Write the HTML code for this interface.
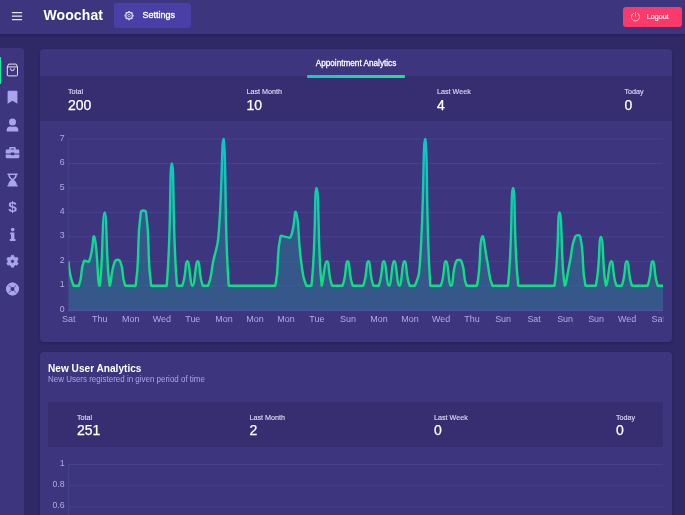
<!DOCTYPE html>
<html><head><meta charset="utf-8"><title>Woochat</title>
<style>
*{box-sizing:border-box;margin:0;padding:0}
html,body{width:685px;height:515px;overflow:hidden;background:#2f2967;font-family:"Liberation Sans",sans-serif;color:#fff}
.abs{position:absolute}
#top{position:absolute;left:0;top:0;width:685px;height:33.6px;background:#3d367f;box-shadow:0 1px 3px rgba(25,18,70,.45)}
#logo{position:absolute;left:43.5px;top:6.8px;font-size:14px;font-weight:bold;letter-spacing:.1px;line-height:17px;color:#fff}
#settings{position:absolute;left:114.2px;top:3.2px;width:76.700px;height:24.500px;background:#4a3fa6;border-radius:3px}
#settings span{position:absolute;left:28.400px;top:6.700px;font-size:9px;line-height:10px;color:#fff;-webkit-text-stroke:.35px #fff}
#logout{position:absolute;left:622.6px;top:6.800px;width:59px;height:20px;background:#fb3a69;border-radius:3px}
#logout span{position:absolute;left:24.2px;top:6.400px;font-size:7.200px;line-height:8px;color:#fff;-webkit-text-stroke:.2px #fff}
#side{position:absolute;left:0;top:48.2px;width:23.7px;height:480px;background:#3d367f;border-top-right-radius:4px}
#act{position:absolute;left:0;top:56.8px;width:1.400px;height:27.3px;background:#1de9a0}
.card{position:absolute;left:40px;width:632.300px;background:#3d367f;border-radius:4px;box-shadow:0 1px 3px rgba(25,18,70,.4)}
#c1{top:49.2px;height:292.8px}
#c2{top:352.4px;height:200px}
.stats{position:absolute;background:#362e71}
.lbl{position:absolute;font-size:7.2px;line-height:8px;color:#dcd8f5;white-space:nowrap;-webkit-text-stroke:.15px #dcd8f5}
.val{position:absolute;font-size:14px;line-height:15px;color:#fff;white-space:nowrap;-webkit-text-stroke:.25px #fff;margin-left:.5px}
#tab{position:absolute;left:256px;width:200px;top:58.4px;text-align:center;font-size:9.4px;line-height:10px;color:#fff;-webkit-text-stroke:.3px #fff;transform:scaleX(.874);white-space:nowrap}
#tabline{position:absolute;left:306.5px;top:75.2px;width:98.5px;height:2.6px;background:linear-gradient(90deg,#10cdbd,#1de28e);border-radius:1.3px}
#t2{position:absolute;left:48px;top:362.4px;font-size:11px;line-height:13px;font-weight:bold;color:#fff;transform:scaleX(.919);transform-origin:0 0;white-space:nowrap}
#s2{position:absolute;left:48px;top:374.2px;font-size:8.6px;line-height:10px;color:#aba5ea;transform:scaleX(.928);transform-origin:0 0;white-space:nowrap}
svg{position:absolute;left:0;top:0}
svg text{font-family:"Liberation Sans",sans-serif;font-size:9.7px;fill:#b0abe0}
.g line{stroke:#4a4492;stroke-width:.8}
#wrap{position:absolute;left:0;top:0;width:685px;height:515px;overflow:hidden;will-change:transform}
</style></head><body><div id="wrap">
<div id="top"></div>
<div id="logo">Woochat</div>
<div id="settings"><span>Settings</span></div>
<div id="logout"><span>Logout</span></div>
<div id="side"></div><div id="act"></div>
<div class="card" id="c1"></div>
<div class="stats" style="left:40px;top:76.2px;width:632px;height:45.300px"></div>
<div id="tab">Appointment Analytics</div><div id="tabline"></div>
<div class="lbl" style="left:68px;top:88.1px">Total</div><div class="val" style="left:67.5px;top:97.6px">200</div>
<div class="lbl" style="left:246.5px;top:88.1px">Last Month</div><div class="val" style="left:246px;top:97.6px">10</div>
<div class="lbl" style="left:437px;top:88.1px">Last Week</div><div class="val" style="left:436.5px;top:97.6px">4</div>
<div class="lbl" style="left:624.5px;top:88.1px">Today</div><div class="val" style="left:624px;top:97.6px">0</div>
<div class="card" id="c2"></div>
<div id="t2">New User Analytics</div>
<div id="s2">New Users registered in given period of time</div>
<div class="stats" style="left:48px;top:402px;width:615px;height:44.5px"></div>
<div class="lbl" style="left:77px;top:413.6px">Total</div><div class="val" style="left:76.5px;top:423.1px">251</div>
<div class="lbl" style="left:249.5px;top:413.6px">Last Month</div><div class="val" style="left:249px;top:423.1px">2</div>
<div class="lbl" style="left:434px;top:413.6px">Last Week</div><div class="val" style="left:433.5px;top:423.1px">0</div>
<div class="lbl" style="left:616px;top:413.6px">Today</div><div class="val" style="left:615.5px;top:423.1px">0</div>
<svg width="685" height="515" viewBox="0 0 685 515">
<defs>
<linearGradient id="sg" gradientUnits="userSpaceOnUse" x1="0" y1="139" x2="0" y2="285.5"><stop offset="0" stop-color="#0cc5c8"/><stop offset="1" stop-color="#0fe07f"/></linearGradient>
<clipPath id="cp"><rect x="50" y="300" width="613.2" height="40"/></clipPath><clipPath id="cc"><rect x="68" y="130" width="595.2" height="185"/></clipPath><filter id="bl" x="-2%" y="-5%" width="104%" height="110%"><feGaussianBlur stdDeviation=".25"/></filter></defs>
<g class="g"><line x1="68" x2="663" y1="310.2" y2="310.2"/><line x1="68" x2="663" y1="285.7" y2="285.7"/><line x1="68" x2="663" y1="261.3" y2="261.3"/><line x1="68" x2="663" y1="236.8" y2="236.8"/><line x1="68" x2="663" y1="212.4" y2="212.4"/><line x1="68" x2="663" y1="187.9" y2="187.9"/><line x1="68" x2="663" y1="163.5" y2="163.5"/><line x1="68" x2="663" y1="139.0" y2="139.0"/></g>
<g clip-path="url(#cc)" filter="url(#bl)"><path d="M68.45 261.29C68.45 261.29 69.34 275.61 73.62 285.74C74.51 285.74 77.90 285.74 78.79 285.74C83.08 275.61 79.68 271.42 83.96 261.29C84.85 259.19 88.25 263.38 89.13 261.29C93.42 251.15 92.56 232.71 94.30 236.83C97.73 244.94 97.40 285.74 99.47 285.74C102.57 278.41 102.06 212.37 104.64 212.37C107.23 212.37 105.95 267.49 109.81 285.74C111.12 285.74 110.70 271.42 114.98 261.29C115.87 259.19 119.27 259.19 120.15 261.29C124.44 271.42 121.04 275.61 125.32 285.74C126.21 285.74 127.91 285.74 130.50 285.74C133.08 285.74 135.33 285.74 135.67 285.74C140.50 251.47 136.01 246.65 140.84 212.37C141.18 209.96 145.67 209.96 146.01 212.37C150.84 246.65 146.35 251.47 151.18 285.74C151.52 285.74 153.76 285.74 156.35 285.74C158.93 285.74 158.93 285.74 161.52 285.74C164.10 285.74 166.48 285.74 166.69 285.74C171.65 227.08 169.27 163.46 171.86 163.46C174.44 163.46 172.07 227.08 177.03 285.74C177.24 285.74 181.31 285.74 182.20 285.74C186.48 275.61 184.78 261.29 187.37 261.29C189.96 261.29 189.96 285.74 192.54 285.74C195.13 285.74 195.13 261.29 197.71 261.29C200.30 261.29 198.60 275.61 202.88 285.74C203.77 285.74 207.17 285.74 208.05 285.74C212.34 275.61 210.64 273.51 213.22 261.29C215.81 249.06 217.34 249.26 218.39 236.83C222.51 188.12 221.49 139.00 223.56 139.00C226.66 153.67 223.74 214.87 228.73 285.74C228.91 285.74 231.32 285.74 233.90 285.74C236.49 285.74 236.49 285.74 239.07 285.74C241.66 285.74 241.66 285.74 244.24 285.74C246.83 285.74 246.83 285.74 249.42 285.74C252.00 285.74 252.00 285.74 254.59 285.74C257.17 285.74 257.17 285.74 259.76 285.74C262.34 285.74 262.34 285.74 264.93 285.74C267.51 285.74 267.51 285.74 270.10 285.74C272.68 285.74 274.78 285.74 275.27 285.74C279.95 263.61 275.76 258.96 280.44 236.83C280.93 234.50 283.02 236.83 285.61 236.83C288.19 236.83 289.89 238.92 290.78 236.83C295.06 226.70 294.21 208.25 295.95 212.37C299.38 220.48 297.69 236.96 301.12 261.29C302.86 273.65 302.01 275.61 306.29 285.74C307.18 285.74 311.20 285.74 311.46 285.74C316.37 239.28 314.05 187.91 316.63 187.91C319.22 187.91 317.68 256.52 321.80 285.74C322.85 285.74 324.39 261.29 326.97 261.29C329.56 261.29 327.86 275.61 332.14 285.74C333.03 285.74 334.73 285.74 337.31 285.74C339.90 285.74 341.60 285.74 342.48 285.74C346.77 275.61 345.07 261.29 347.65 261.29C350.24 261.29 348.54 275.61 352.82 285.74C353.71 285.74 355.41 285.74 357.99 285.74C360.58 285.74 362.28 285.74 363.16 285.74C367.45 275.61 365.75 261.29 368.34 261.29C370.92 261.29 369.22 275.61 373.51 285.74C374.39 285.74 377.79 285.74 378.68 285.74C382.96 275.61 381.26 261.29 383.85 261.29C386.43 261.29 386.43 285.74 389.02 285.74C391.60 285.74 391.60 261.29 394.19 261.29C396.77 261.29 396.77 285.74 399.36 285.74C401.94 285.74 401.94 261.29 404.53 261.29C407.11 261.29 405.41 275.61 409.70 285.74C410.58 285.74 413.98 285.74 414.87 285.74C419.15 275.61 419.16 273.73 420.04 261.29C424.33 200.36 422.86 139.00 425.21 139.00C428.03 145.67 425.39 214.87 430.38 285.74C430.56 285.74 432.97 285.74 435.55 285.74C438.14 285.74 439.84 285.74 440.72 285.74C445.01 275.61 443.31 261.29 445.89 261.29C448.48 261.29 448.48 285.74 451.06 285.74C453.65 285.74 451.95 271.42 456.23 261.29C457.12 259.19 460.52 259.19 461.40 261.29C465.69 271.42 462.29 275.61 466.57 285.74C467.46 285.74 469.16 285.74 471.74 285.74C474.33 285.74 476.42 285.74 476.91 285.74C481.59 263.61 478.66 244.94 482.08 236.83C483.83 232.71 484.67 249.06 487.26 261.29C489.84 273.51 488.14 275.61 492.43 285.74C493.31 285.74 495.01 285.74 497.60 285.74C500.18 285.74 500.18 285.74 502.77 285.74C505.35 285.74 507.68 285.74 507.94 285.74C512.85 239.28 510.52 187.91 513.11 187.91C515.69 187.91 513.37 239.28 518.28 285.74C518.54 285.74 520.86 285.74 523.45 285.74C526.03 285.74 526.03 285.74 528.62 285.74C531.20 285.74 531.20 285.74 533.79 285.74C536.37 285.74 536.37 285.74 538.96 285.74C541.54 285.74 541.54 285.74 544.13 285.74C546.72 285.74 546.72 285.74 549.30 285.74C551.89 285.74 554.13 285.74 554.47 285.74C559.30 251.47 557.06 212.37 559.64 212.37C562.23 212.37 560.95 267.49 564.81 285.74C566.12 285.74 567.40 273.51 569.98 261.29C572.57 249.06 570.87 246.96 575.15 236.83C576.04 234.73 579.83 234.50 580.32 236.83C585.00 258.96 580.81 263.61 585.49 285.74C585.99 285.74 588.08 285.74 590.66 285.74C593.25 285.74 595.34 285.74 595.83 285.74C600.51 263.61 598.42 236.83 601.00 236.83C603.59 236.83 602.75 277.63 606.18 285.74C607.92 285.74 608.76 261.29 611.35 261.29C613.93 261.29 612.23 275.61 616.52 285.74C617.40 285.74 620.80 285.74 621.69 285.74C625.97 275.61 624.27 261.29 626.86 261.29C629.44 261.29 627.74 275.61 632.03 285.74C632.91 285.74 634.61 285.74 637.20 285.74C639.78 285.74 639.78 285.74 642.37 285.74C644.95 285.74 646.65 285.74 647.54 285.74C651.82 275.61 650.12 261.29 652.71 261.29C655.29 261.29 653.60 275.61 657.88 285.74C658.77 285.74 663.05 285.74 663.05 285.74L663.05 310.20 L68.45 310.20 Z" fill="#2b8f9c" fill-opacity=".38"/>
<path d="M68.45 261.29C68.45 261.29 69.34 275.61 73.62 285.74C74.51 285.74 77.90 285.74 78.79 285.74C83.08 275.61 79.68 271.42 83.96 261.29C84.85 259.19 88.25 263.38 89.13 261.29C93.42 251.15 92.56 232.71 94.30 236.83C97.73 244.94 97.40 285.74 99.47 285.74C102.57 278.41 102.06 212.37 104.64 212.37C107.23 212.37 105.95 267.49 109.81 285.74C111.12 285.74 110.70 271.42 114.98 261.29C115.87 259.19 119.27 259.19 120.15 261.29C124.44 271.42 121.04 275.61 125.32 285.74C126.21 285.74 127.91 285.74 130.50 285.74C133.08 285.74 135.33 285.74 135.67 285.74C140.50 251.47 136.01 246.65 140.84 212.37C141.18 209.96 145.67 209.96 146.01 212.37C150.84 246.65 146.35 251.47 151.18 285.74C151.52 285.74 153.76 285.74 156.35 285.74C158.93 285.74 158.93 285.74 161.52 285.74C164.10 285.74 166.48 285.74 166.69 285.74C171.65 227.08 169.27 163.46 171.86 163.46C174.44 163.46 172.07 227.08 177.03 285.74C177.24 285.74 181.31 285.74 182.20 285.74C186.48 275.61 184.78 261.29 187.37 261.29C189.96 261.29 189.96 285.74 192.54 285.74C195.13 285.74 195.13 261.29 197.71 261.29C200.30 261.29 198.60 275.61 202.88 285.74C203.77 285.74 207.17 285.74 208.05 285.74C212.34 275.61 210.64 273.51 213.22 261.29C215.81 249.06 217.34 249.26 218.39 236.83C222.51 188.12 221.49 139.00 223.56 139.00C226.66 153.67 223.74 214.87 228.73 285.74C228.91 285.74 231.32 285.74 233.90 285.74C236.49 285.74 236.49 285.74 239.07 285.74C241.66 285.74 241.66 285.74 244.24 285.74C246.83 285.74 246.83 285.74 249.42 285.74C252.00 285.74 252.00 285.74 254.59 285.74C257.17 285.74 257.17 285.74 259.76 285.74C262.34 285.74 262.34 285.74 264.93 285.74C267.51 285.74 267.51 285.74 270.10 285.74C272.68 285.74 274.78 285.74 275.27 285.74C279.95 263.61 275.76 258.96 280.44 236.83C280.93 234.50 283.02 236.83 285.61 236.83C288.19 236.83 289.89 238.92 290.78 236.83C295.06 226.70 294.21 208.25 295.95 212.37C299.38 220.48 297.69 236.96 301.12 261.29C302.86 273.65 302.01 275.61 306.29 285.74C307.18 285.74 311.20 285.74 311.46 285.74C316.37 239.28 314.05 187.91 316.63 187.91C319.22 187.91 317.68 256.52 321.80 285.74C322.85 285.74 324.39 261.29 326.97 261.29C329.56 261.29 327.86 275.61 332.14 285.74C333.03 285.74 334.73 285.74 337.31 285.74C339.90 285.74 341.60 285.74 342.48 285.74C346.77 275.61 345.07 261.29 347.65 261.29C350.24 261.29 348.54 275.61 352.82 285.74C353.71 285.74 355.41 285.74 357.99 285.74C360.58 285.74 362.28 285.74 363.16 285.74C367.45 275.61 365.75 261.29 368.34 261.29C370.92 261.29 369.22 275.61 373.51 285.74C374.39 285.74 377.79 285.74 378.68 285.74C382.96 275.61 381.26 261.29 383.85 261.29C386.43 261.29 386.43 285.74 389.02 285.74C391.60 285.74 391.60 261.29 394.19 261.29C396.77 261.29 396.77 285.74 399.36 285.74C401.94 285.74 401.94 261.29 404.53 261.29C407.11 261.29 405.41 275.61 409.70 285.74C410.58 285.74 413.98 285.74 414.87 285.74C419.15 275.61 419.16 273.73 420.04 261.29C424.33 200.36 422.86 139.00 425.21 139.00C428.03 145.67 425.39 214.87 430.38 285.74C430.56 285.74 432.97 285.74 435.55 285.74C438.14 285.74 439.84 285.74 440.72 285.74C445.01 275.61 443.31 261.29 445.89 261.29C448.48 261.29 448.48 285.74 451.06 285.74C453.65 285.74 451.95 271.42 456.23 261.29C457.12 259.19 460.52 259.19 461.40 261.29C465.69 271.42 462.29 275.61 466.57 285.74C467.46 285.74 469.16 285.74 471.74 285.74C474.33 285.74 476.42 285.74 476.91 285.74C481.59 263.61 478.66 244.94 482.08 236.83C483.83 232.71 484.67 249.06 487.26 261.29C489.84 273.51 488.14 275.61 492.43 285.74C493.31 285.74 495.01 285.74 497.60 285.74C500.18 285.74 500.18 285.74 502.77 285.74C505.35 285.74 507.68 285.74 507.94 285.74C512.85 239.28 510.52 187.91 513.11 187.91C515.69 187.91 513.37 239.28 518.28 285.74C518.54 285.74 520.86 285.74 523.45 285.74C526.03 285.74 526.03 285.74 528.62 285.74C531.20 285.74 531.20 285.74 533.79 285.74C536.37 285.74 536.37 285.74 538.96 285.74C541.54 285.74 541.54 285.74 544.13 285.74C546.72 285.74 546.72 285.74 549.30 285.74C551.89 285.74 554.13 285.74 554.47 285.74C559.30 251.47 557.06 212.37 559.64 212.37C562.23 212.37 560.95 267.49 564.81 285.74C566.12 285.74 567.40 273.51 569.98 261.29C572.57 249.06 570.87 246.96 575.15 236.83C576.04 234.73 579.83 234.50 580.32 236.83C585.00 258.96 580.81 263.61 585.49 285.74C585.99 285.74 588.08 285.74 590.66 285.74C593.25 285.74 595.34 285.74 595.83 285.74C600.51 263.61 598.42 236.83 601.00 236.83C603.59 236.83 602.75 277.63 606.18 285.74C607.92 285.74 608.76 261.29 611.35 261.29C613.93 261.29 612.23 275.61 616.52 285.74C617.40 285.74 620.80 285.74 621.69 285.74C625.97 275.61 624.27 261.29 626.86 261.29C629.44 261.29 627.74 275.61 632.03 285.74C632.91 285.74 634.61 285.74 637.20 285.74C639.78 285.74 639.78 285.74 642.37 285.74C644.95 285.74 646.65 285.74 647.54 285.74C651.82 275.61 650.12 261.29 652.71 261.29C655.29 261.29 653.60 275.61 657.88 285.74C658.77 285.74 663.05 285.74 663.05 285.74" fill="none" stroke="url(#sg)" stroke-width="2.4" stroke-linejoin="round" stroke-linecap="butt"/></g>
<g class="g"><line x1="68.3" x2="68.3" y1="139" y2="310.2"/><line x1="68" x2="663" y1="310.6" y2="310.6" style="stroke:#5752a4;stroke-width:1"/></g>
<g><text transform="translate(64.6 311.8) scale(.9 1)" text-anchor="end">0</text><text transform="translate(64.6 287.3) scale(.9 1)" text-anchor="end">1</text><text transform="translate(64.6 262.9) scale(.9 1)" text-anchor="end">2</text><text transform="translate(64.6 238.4) scale(.9 1)" text-anchor="end">3</text><text transform="translate(64.6 214.0) scale(.9 1)" text-anchor="end">4</text><text transform="translate(64.6 189.5) scale(.9 1)" text-anchor="end">5</text><text transform="translate(64.6 165.1) scale(.9 1)" text-anchor="end">6</text><text transform="translate(64.6 140.6) scale(.9 1)" text-anchor="end">7</text></g>
<g clip-path="url(#cp)"><text transform="translate(68.8 322.2) scale(.925 1)" text-anchor="middle">Sat</text><text transform="translate(99.8 322.2) scale(.925 1)" text-anchor="middle">Thu</text><text transform="translate(130.8 322.2) scale(.925 1)" text-anchor="middle">Mon</text><text transform="translate(161.8 322.2) scale(.925 1)" text-anchor="middle">Wed</text><text transform="translate(192.8 322.2) scale(.925 1)" text-anchor="middle">Tue</text><text transform="translate(223.9 322.2) scale(.925 1)" text-anchor="middle">Mon</text><text transform="translate(254.9 322.2) scale(.925 1)" text-anchor="middle">Mon</text><text transform="translate(285.9 322.2) scale(.925 1)" text-anchor="middle">Mon</text><text transform="translate(316.9 322.2) scale(.925 1)" text-anchor="middle">Tue</text><text transform="translate(348.0 322.2) scale(.925 1)" text-anchor="middle">Sun</text><text transform="translate(379.0 322.2) scale(.925 1)" text-anchor="middle">Mon</text><text transform="translate(410.0 322.2) scale(.925 1)" text-anchor="middle">Mon</text><text transform="translate(441.0 322.2) scale(.925 1)" text-anchor="middle">Wed</text><text transform="translate(472.0 322.2) scale(.925 1)" text-anchor="middle">Thu</text><text transform="translate(503.1 322.2) scale(.925 1)" text-anchor="middle">Sun</text><text transform="translate(534.1 322.2) scale(.925 1)" text-anchor="middle">Sat</text><text transform="translate(565.1 322.2) scale(.925 1)" text-anchor="middle">Sun</text><text transform="translate(596.1 322.2) scale(.925 1)" text-anchor="middle">Sun</text><text transform="translate(627.2 322.2) scale(.925 1)" text-anchor="middle">Wed</text><text transform="translate(658.2 322.2) scale(.925 1)" text-anchor="middle">Sat</text></g>
<g class="g"><line x1="68" x2="663" y1="464.5" y2="464.5"/><line x1="68" x2="663" y1="485.7" y2="485.7"/><line x1="68" x2="663" y1="506.9" y2="506.9"/><line x1="68.4" x2="68.4" y1="464.5" y2="520"/></g>
<g><text transform="translate(64.6 465.700) scale(.9 1)" text-anchor="end">1</text><text transform="translate(64.6 486.900) scale(.9 1)" text-anchor="end">0.8</text><text transform="translate(64.6 508.100) scale(.9 1)" text-anchor="end">0.6</text></g>
<g stroke="#e9e6fb" stroke-width="1.1" stroke-linecap="round"><line x1="12.3" x2="21.7" y1="12.6" y2="12.6"/><line x1="12.3" x2="21.7" y1="16.1" y2="16.1"/><line x1="12.3" x2="21.7" y1="19.6" y2="19.6"/></g>
<g fill="none" stroke="#d9d4f6" stroke-width="1.250"><circle cx="129.1" cy="15.600" r="3.300"/><circle cx="129.1" cy="15.600" r="1.300" stroke-width=".8"/></g>
<g stroke="#d9d4f6" stroke-width="1.700"><line x1="132.60" y1="15.60" x2="133.70" y2="15.60"/><line x1="131.57" y1="18.07" x2="132.35" y2="18.85"/><line x1="129.10" y1="19.10" x2="129.10" y2="20.20"/><line x1="126.63" y1="18.07" x2="125.85" y2="18.85"/><line x1="125.60" y1="15.60" x2="124.50" y2="15.60"/><line x1="126.63" y1="13.13" x2="125.85" y2="12.35"/><line x1="129.10" y1="12.10" x2="129.10" y2="11.00"/><line x1="131.57" y1="13.13" x2="132.35" y2="12.35"/></g>
<g fill="none" stroke="#ffe3ea" stroke-width=".8" stroke-linecap="round"><path d="M633.6 13.2A4.1 4.1 0 1 0 637.4 13.2"/><line x1="635.5" x2="635.5" y1="12.3" y2="16"/></g>
<g fill="none" stroke="#eddff3" stroke-width="1" stroke-linejoin="round"><path d="M8.6 64.1h7.6l1.3 2.8v8a1 1 0 0 1-1 1h-8.2a1 1 0 0 1-1-1v-8z"/><path d="M7.3 66.9h10.2"/><path d="M10.5 68.800a1.900 1.900 0 0 0 3.800 0" stroke-linecap="round"/></g>
<path fill="#aaa4ec" d="M7.6 91.8a1 1 0 0 1 1-1h7.8a1 1 0 0 1 1 1v12l-4.9-3.1-4.9 3.1z"/>
<g fill="#aaa4ec"><circle cx="12.5" cy="122" r="3.5"/><path d="M6.7 131.6v-1.6a3.6 3.6 0 0 1 3.6-3.6h.5a4.6 4.6 0 0 0 3.4 0h.5a3.6 3.6 0 0 1 3.6 3.6v1.6a.0 .0 0 0 1 0 0z"/></g>
<g fill="#aaa4ec"><path fill-rule="evenodd" d="M9.2 149.6v-1.5a1.1 1.1 0 0 1 1.1-1.1h4.4a1.1 1.1 0 0 1 1.1 1.1v1.5h2.4a1.1 1.1 0 0 1 1.1 1.1v2.7h-5v-.8h-3.6v.8h-5v-2.700a1.1 1.1 0 0 1 1.1-1.1zM10.800 148.5v1.100h3.400v-1.100z"/><path d="M5.7 154.400h5v.9h3.600v-.9h5v2.700a1.1 1.1 0 0 1-1.1 1.100h-11.400a1.100 1.100 0 0 1-1.100-1.100z"/></g>
<g fill="#aaa4ec"><rect x="7.400" y="173.400" width="10.300" height="1.500" rx=".4"/><rect x="7.400" y="184.900" width="10.300" height="1.500" rx=".4"/><path fill-rule="evenodd" d="M8.300 174.800h8.500c0 2.600-1.400 4.300-3 5.100 1.600.8 3 2.500 3 5.100h-8.500c0-2.600 1.400-4.300 3-5.100-1.600-.8-3-2.500-3-5.100zM9.900 174.900c.2 1.900 1.400 3.300 2.650 3.900 1.250-.6 2.450-2 2.650-3.900z"/></g>
<text x="12.600" y="212.300" text-anchor="middle" style="font-size:15.500px;font-weight:bold;fill:#aaa4ec">$</text>
<g fill="#aaa4ec"><circle cx="12.700" cy="229.600" r="1.800"/><path d="M10.200 232.600h4.200v6.300h1.100v2h-5.700v-2h1.200v-4.300h-.8z"/></g>
<path fill="#aaa4ec" fill-rule="evenodd" stroke="#aaa4ec" stroke-width=".6" stroke-linejoin="round" d="M11.11 256.70L11.36 255.31L13.64 255.31L13.89 256.70L15.79 257.80L17.12 257.31L18.26 259.29L17.17 260.20L17.17 262.40L18.26 263.31L17.12 265.29L15.79 264.80L13.89 265.90L13.64 267.29L11.36 267.29L11.11 265.90L9.21 264.80L7.88 265.29L6.74 263.31L7.83 262.40L7.83 260.20L6.74 259.29L7.88 257.31L9.21 257.80ZM10.60 261.30 a1.90 1.90 0 1 0 3.80 0 a1.90 1.90 0 1 0 -3.80 0Z"/>
<g><circle cx="12.500" cy="289" r="4.200" fill="none" stroke="#aaa4ec" stroke-width="4.400"/><g stroke="#4a4390" stroke-width=".9"><line x1="13.77" y1="290.27" x2="16.25" y2="292.75"/><line x1="13.77" y1="287.73" x2="16.25" y2="285.25"/><line x1="11.23" y1="290.27" x2="8.75" y2="292.75"/><line x1="11.23" y1="287.73" x2="8.75" y2="285.25"/></g><circle cx="12.500" cy="289" r="5.900" fill="none" stroke="#aaa4ec" stroke-width="1"/></g>
</svg>
</div></body></html>
